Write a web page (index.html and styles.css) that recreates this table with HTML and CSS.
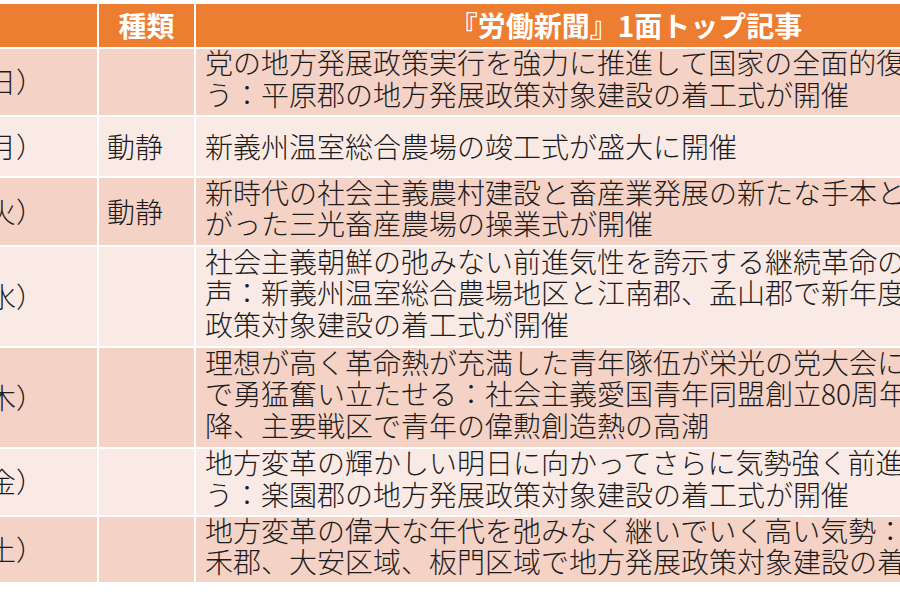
FILE: index.html
```html
<!DOCTYPE html>
<html lang="ja">
<head>
<meta charset="utf-8">
<title>労働新聞 1面トップ記事</title>
<link rel="stylesheet" href="styles.css">
</head>
<body>
<div class="table">
  <div class="row head">
    <div class="cell date"></div>
    <div class="cell kind">種類</div>
    <div class="cell title">『労働新聞』1面トップ記事</div>
  </div>
  <div class="row band r1">
    <div class="cell date">日）</div>
    <div class="cell kind"></div>
    <div class="cell text multi">党の地方発展政策実行を強力に推進して国家の全面的復<br>う：平原郡の地方発展政策対象建設の着工式が開催</div>
  </div>
  <div class="row light r2">
    <div class="cell date">月）</div>
    <div class="cell kind">動静</div>
    <div class="cell text">新義州温室総合農場の竣工式が盛大に開催</div>
  </div>
  <div class="row band r3">
    <div class="cell date">火）</div>
    <div class="cell kind">動静</div>
    <div class="cell text multi">新時代の社会主義農村建設と畜産業発展の新たな手本と<br>がった三光畜産農場の操業式が開催</div>
  </div>
  <div class="row light r4">
    <div class="cell date">水）</div>
    <div class="cell kind"></div>
    <div class="cell text multi">社会主義朝鮮の弛みない前進気性を誇示する継続革命の<br>声：新義州温室総合農場地区と江南郡、孟山郡で新年度<br>政策対象建設の着工式が開催</div>
  </div>
  <div class="row band r5">
    <div class="cell date">木）</div>
    <div class="cell kind"></div>
    <div class="cell text multi">理想が高く革命熱が充満した青年隊伍が栄光の党大会に<br>で勇猛奮い立たせる：社会主義愛国青年同盟創立80周年<br>降、主要戦区で青年の偉勲創造熱の高潮</div>
  </div>
  <div class="row light r6">
    <div class="cell date">金）</div>
    <div class="cell kind"></div>
    <div class="cell text multi">地方変革の輝かしい明日に向かってさらに気勢強く前進<br>う：楽園郡の地方発展政策対象建設の着工式が開催</div>
  </div>
  <div class="row band r7">
    <div class="cell date">土）</div>
    <div class="cell kind"></div>
    <div class="cell text multi">地方変革の偉大な年代を弛みなく継いでいく高い気勢：<br>禾郡、大安区域、板門区域で地方発展政策対象建設の着</div>
  </div>
</div>
</body>
</html>
```

FILE: styles.css
```css
html, body {
  margin: 0;
  padding: 0;
  background: #ffffff;
  overflow: hidden;
  width: 900px;
  height: 600px;
}

body {
  font-family: "Noto Sans CJK JP", "Noto Sans", sans-serif;
  color: #1c1c1c;
  font-size: 28px;
  font-weight: 300;
}

.table {
  width: 1056px;
  margin-top: 4px;
  display: flex;
  flex-direction: column;
  gap: 2px;
}

.row {
  display: grid;
  grid-template-columns: 97px 95px 860px;
  column-gap: 2px;
}

.head { height: 43px; }
.r1 { height: 66px; }
.r2 { height: 59px; }
.r3 { height: 67px; }
.r4 { height: 99px; }
.r5 { height: 99px; }
.r6 { height: 66px; }
.r7 { height: 65px; }

.cell {
  display: flex;
  align-items: center;
  white-space: nowrap;
  overflow: hidden;
  line-height: 31.5px;
}

.head .cell {
  background: #ed7d31;
  color: #ffffff;
  font-weight: 700;
  justify-content: center;
}

.band .cell { background: #f5d2c6; }
.light .cell { background: #faeae6; }

.date {
  text-indent: -12px;
  overflow: visible;
}

.kind {
  padding: 0 8px;
}

.head .kind,
.head .title {
  padding: 0;
}

.text {
  padding: 0 9px;
}

.multi {
  padding-bottom: 7px;
}
```
